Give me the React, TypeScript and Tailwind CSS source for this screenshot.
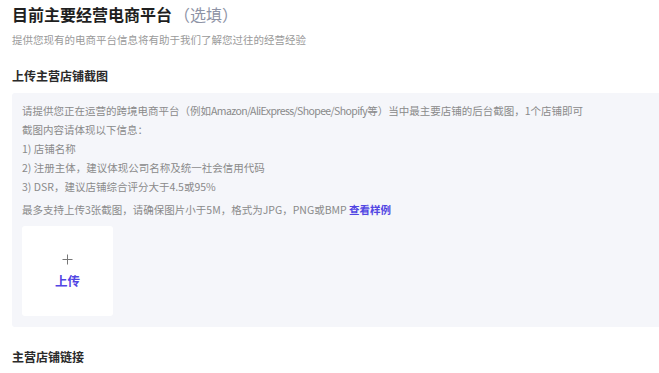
import React from "react";

const infoLines = [
  "截图内容请体现以下信息：",
  "1) 店铺名称",
  "2) 注册主体，建议体现公司名称及统一社会信用代码",
  "3) DSR，建议店铺综合评分大于4.5或95%",
];

export default function App() {
  return (
    <div
      className="w-[659px] h-[373px] overflow-hidden bg-white pl-[12px]"
      style={{ fontFamily: '"Noto Sans CJK SC", "Noto Sans", sans-serif' }}
    >
      {/* Page title */}
      <div className="pt-[2px] flex items-baseline leading-[24px]">
        <span className="text-[16px] font-bold text-[#1f1f1f]">目前主要经营电商平台</span>
        <span className="ml-[2px] text-[16px] text-[#8e93a6]">（选填）</span>
      </div>
      <p className="mt-[6px] text-[10.5px] leading-[16px] text-[#9a9a9a]">
        提供您现有的电商平台信息将有助于我们了解您过往的经营经验
      </p>

      {/* Screenshot upload */}
      <h3 className="mt-[19px] text-[12px] leading-[18px] font-bold text-[#2a2a2a]">
        上传主营店铺截图
      </h3>
      <div className="mt-[8px] bg-[#f5f6fa] rounded-l-[3px] pl-[10px] pt-[8px] pb-[11px]">
        <div className="text-[10.5px] leading-[19px] text-[#8a8a8a]">
          <p>
            请提供您正在运营的跨境电商平台（例如
            <span className="tracking-[-0.6px]">Amazon/AliExpress/Shopee/Shopify</span>
            等）当中最主要店铺的后台截图，1个店铺即可
          </p>
          {infoLines.map((line) => (
            <p key={line}>{line}</p>
          ))}
          <p className="mt-[4px]">
            最多支持上传3张截图，请确保图片小于5M，格式为JPG，PNG或BMP{" "}
            <span className="font-bold text-[#5246e3] cursor-pointer">查看样例</span>
          </p>
        </div>
        <button className="mt-[7px] w-[91px] h-[90px] bg-white rounded-[3px] flex flex-col items-center justify-center">
          <svg width="11" height="11" viewBox="0 0 11 11">
            <path d="M5.5 0.5v10M0.5 5.5h10" stroke="#777" strokeWidth="1" fill="none" />
          </svg>
          <span className="mt-[8px] text-[12.5px] leading-[16px] font-bold text-[#5246e3]">上传</span>
        </button>
      </div>

      {/* Store link */}
      <h3 className="mt-[21px] text-[12px] leading-[18px] font-bold text-[#2a2a2a]">
        主营店铺链接
      </h3>
    </div>
  );
}
